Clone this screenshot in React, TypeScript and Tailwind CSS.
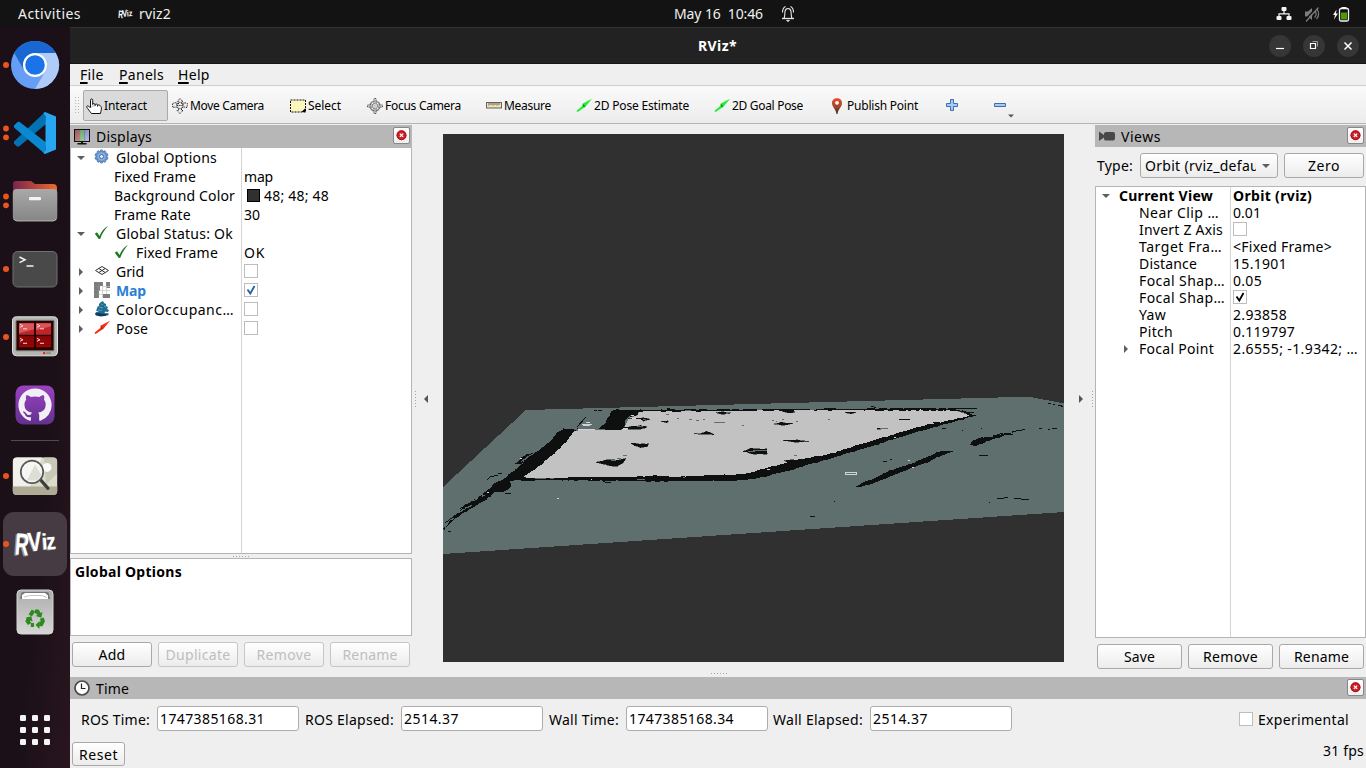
import { useLayoutEffect, useRef, useState, type ReactNode } from 'react';

/* Text whose tracking is tuned so that it takes exactly `w` pixels. */
function T({ w, c = '', children }: { w: number; c?: string; children: string }) {
  const ref = useRef<HTMLSpanElement>(null);
  const [ls, setLs] = useState(0);
  useLayoutEffect(() => {
    if (ref.current) setLs((w - ref.current.getBoundingClientRect().width) / children.length);
  }, []);
  return (
    <span ref={ref} className={`shrink-0 whitespace-pre ${c}`} style={{ letterSpacing: ls }}>
      {children}
    </span>
  );
}

/* ---------- dock ---------- */

function DockItem({ dots = 0, active = false, children }: { dots?: number; active?: boolean; children: ReactNode }) {
  return (
    <svg width="70" height="68" viewBox="0 0 70 68" className="block shrink-0">
      {active && <rect x="3" y="2" width="64" height="64" rx="11" fill="#463b42" />}
      {dots === 1 && <circle cx="6" cy="34" r="3" fill="#e95420" />}
      {dots === 2 && (
        <g fill="#e95420">
          <circle cx="6" cy="29.5" r="2.9" />
          <circle cx="6" cy="38.3" r="2.9" />
        </g>
      )}
      {children}
    </svg>
  );
}

function Dock() {
  return (
    <div className="flex w-[70px] shrink-0 flex-col bg-linear-to-br from-[#1b1017] from-60% to-[#29151f] pt-1 pb-1">
      <DockItem dots={1}>
        <circle cx="35" cy="34" r="24" fill="#669df6" />
        <path d="M14.2 22A24 24 0 0 1 55.8 22H35A12 12 0 0 0 24.6 40Z" fill="#1967d2" />
        <path d="M55.8 22A24 24 0 0 1 35 58L45.4 40A12 12 0 0 0 35 22Z" fill="#aecbfa" />
        <circle cx="35" cy="34" r="12" fill="#fff" />
        <circle cx="35" cy="34" r="9.8" fill="#1a73e8" />
      </DockItem>
      <DockItem dots={2}>
        <path d="M45 13L46 25 19 47.5 17 47.5 14 44.5 14 42.5Z" fill="#0272b5" />
        <path d="M17 23.5L19 22.5 46 43.5 45 55 14 28.5 14 26.5Z" fill="#0a88d0" />
        <path d="M45 13L56 17.5V50.5L45 55 43.5 54 45.5 51V17L43.5 14Z" fill="#27a6f2" />
      </DockItem>
      <DockItem dots={2}>
        <defs>
          <linearGradient id="folder" x1="0" x2="1">
            <stop offset="0" stopColor="#7a2450" />
            <stop offset="1" stopColor="#f06a2c" />
          </linearGradient>
          <linearGradient id="front" x1="0" x2="0" y1="0" y2="1">
            <stop offset="0" stopColor="#a9a9a9" />
            <stop offset="1" stopColor="#868686" />
          </linearGradient>
        </defs>
        <path d="M13 17a3 3 0 0 1 3-3h15l4 3h18a4 4 0 0 1 4 4v14H13Z" fill="url(#folder)" />
        <rect x="12.8" y="22" width="44.5" height="32" rx="4" fill="url(#front)" />
        <path d="M14 52a4 4 0 0 0 3 2h36a4 4 0 0 0 3-2" fill="none" stroke="#c4c4c4" strokeWidth=".8" />
        <rect x="29" y="30" width="12" height="3.2" rx="1" fill="#f4f4f4" />
      </DockItem>
      <DockItem dots={1}>
        <rect x="13" y="16.5" width="44" height="35.5" rx="4.5" fill="#494949" stroke="#717171" />
        <path d="M19.5 22l5.5 2.800-5.500 2.800M26.500 31h7" fill="none" stroke="#f4f4f4" strokeWidth="1.500" />
      </DockItem>
      <DockItem dots={1}>
        <g transform="translate(0 -.7)">
          <rect x="12.5" y="14.5" width="45" height="39" rx="4" fill="#b5b8b0" stroke="#e2e3df" />
          <rect x="16" y="18" width="38" height="30.5" rx="1" fill="#2a0404" stroke="#7b7d77" />
          <path d="M19 21h15v11.5H19zM36 21h15v11.5H36z" fill="#c22327" />
          <path d="M19 21h15v6L19 31zM36 21h15v3l-15 4z" fill="#d9575a" />
          <path d="M19 34h15v11H19zM36 34h15v11H36z" fill="#960808" />
          <path d="M19 36h32M19 39h32M19 42h32" stroke="#6d0303" strokeWidth=".6" />
          <path d="M20 22l3 1.5L20 25m3 1.5h4M37 22l3 1.5-3 1.5m3 1.5h4M20 36l3 1.5L20 39m3 2h4M37 36l3 1.5-3 1.5m3 2h4" fill="none" stroke="#ffd4d4" strokeWidth="1" />
          <path d="M43 49.8h2.2v2H43z" fill="#f21b1b" />
          <path d="M46 49.8h5v2h-5z" fill="#92958d" />
        </g>
      </DockItem>
      <DockItem>
        <defs>
          <linearGradient id="gh" x1="0" x2="0" y1="0" y2="1">
            <stop offset="0" stopColor="#9a43c1" />
            <stop offset="1" stopColor="#63308f" />
          </linearGradient>
        </defs>
        <rect x="15.5" y="14.5" width="39" height="39" rx="8" fill="url(#gh)" />
        <g transform="translate(18.4 17.4) scale(2.08)">
          <path
            fill="#f3eff6"
            d="M8 0C3.58 0 0 3.58 0 8c0 3.54 2.29 6.53 5.47 7.59.4.07.55-.17.55-.38 0-.19-.01-.82-.01-1.49-2.01.37-2.53-.49-2.69-.94-.09-.23-.48-.94-.82-1.13-.28-.15-.68-.52-.01-.53.63-.01 1.08.58 1.23.82.72 1.21 1.87.87 2.33.66.07-.52.28-.87.51-1.07-1.78-.2-3.64-.89-3.64-3.95 0-.87.31-1.59.82-2.15-.08-.2-.36-1.02.08-2.12 0 0 .67-.21 2.2.82.64-.18 1.32-.27 2-.27s1.36.09 2 .27c1.53-1.04 2.2-.82 2.2-.82.44 1.1.16 1.92.08 2.12.51.56.82 1.27.82 2.15 0 3.07-1.87 3.75-3.65 3.95.29.25.54.73.54 1.48 0 1.07-.01 1.93-.01 2.2 0 .21.15.46.55.38A8.01 8.01 0 0 0 16 8c0-4.42-3.58-8-8-8"
          />
        </g>
      </DockItem>
      <div className="flex h-[3px] w-full shrink-0 items-center justify-center">
        <div className="h-px w-12 bg-[#55494f]" />
      </div>
      <DockItem dots={1}>
        <g transform="translate(0 -.6)">
          <rect x="12.8" y="16" width="44.4" height="37.5" rx="4" fill="#dcdccb" />
          <path d="M13 20a4 4 0 0 1 4-4h25L30 45H13Z" fill="#f1f0ea" />
          <path d="M44 16h9a4 4 0 0 1 4 4v12L46 43Z" fill="#c9c8b6" />
          <path d="M12.8 45h44.4v4.5a4 4 0 0 1-4 4H16.8a4 4 0 0 1-4-4Z" fill="#aeaa93" />
          <circle cx="47" cy="26" r="4.5" fill="#fafafa" />
          <path d="M41 39l7 8" stroke="#3b3f42" strokeWidth="3.2" strokeLinecap="round" />
          <circle cx="32" cy="30.5" r="11.2" fill="#f7f7f5" fillOpacity=".85" stroke="#54585a" strokeWidth="1.7" />
          <path d="M27 39l8-16 6 10-3 6z" fill="#deded6" />
        </g>
      </DockItem>
      <DockItem dots={1} active>
        <g fontFamily="Liberation Sans, sans-serif" fontWeight="700">
          <g fill="#98979a">
            <text transform="translate(13 45.500) rotate(4) scale(.62 1)" fontSize="31">R</text>
            <text transform="translate(27.500 42) rotate(-5) scale(.78 1)" fontSize="27">V</text>
            <text transform="translate(41.500 40) rotate(-4) scale(.9 1)" fontSize="23">i</text>
            <text transform="translate(46.200 40.500) rotate(-5) scale(.8 1)" fontSize="24">z</text>
          </g>
          <g fill="#fff">
            <text transform="translate(14.500 44.500) rotate(4) scale(.62 1)" fontSize="31">R</text>
            <text transform="translate(28.500 41.500) rotate(-5) scale(.78 1)" fontSize="27">V</text>
            <text transform="translate(42.500 39.500) rotate(-4) scale(.9 1)" fontSize="22">i</text>
            <text transform="translate(47.200 39.500) rotate(-5) scale(.8 1)" fontSize="23">z</text>
          </g>
        </g>
      </DockItem>
      <DockItem>
        <defs>
          <linearGradient id="bin" x1="0" x2="0" y1="0" y2="1">
            <stop offset="0" stopColor="#adadad" />
            <stop offset="1" stopColor="#d6d6d6" />
          </linearGradient>
        </defs>
        <rect x="17" y="12" width="36" height="44" rx="4" fill="url(#bin)" stroke="#d5d5d5" />
        <path d="M20 21l1-5a2 2 0 0 1 2-2h24a2 2 0 0 1 2 2l1 5z" fill="#777" />
        <path d="M22 21v-4l3-2h20l3 2.500V21z" fill="#fff" />
        <path d="M24 19l6-1.500h12l5 2" fill="none" stroke="#aaa" strokeWidth=".7" />
        <g fill="none" stroke="#2c8a1f" strokeWidth="4">
          <path d="M30.200 37.500l3.300-5" />
          <path d="M35 33.500h2.500l2 3.200" />
          <path d="M41.800 40.200l1 2.800-1.600 3.200h-2" />
          <path d="M34 47h-3.200" />
          <path d="M29.600 46l-2-3 1.500-3" />
        </g>
        <g fill="#2c8a1f">
          <path d="M42.500 34l-1.200 5.800-5.600-1.800z" />
          <path d="M39.500 43v8l-4-4z" />
          <path d="M25.500 39.800l5.800-1.600 1.300 5.600z" />
        </g>
      </DockItem>
      <svg width="70" height="68" viewBox="0 0 70 68" className="mt-auto block">
        {[0, 1, 2].map((r) =>
          [0, 1, 2].map((k) => <rect key={`${r}${k}`} x={20 + 12 * k} y={19 + 12 * r} width="6" height="6" rx="1.300" fill="#f4f4f4" />),
        )}
      </svg>
    </div>
  );
}

/* ---------- top and title bars ---------- */

function TopBar() {
  return (
    <div className="flex h-[27px] items-center bg-[#131313] text-[14px] text-[#f0f0f0]">
      <div className="flex w-[674px] items-center pl-[18px]">
        <T w={63}>Activities</T>
        <svg width="16" height="16" viewBox="0 0 16 16" className="ml-9 mr-[6px]">
          <g fill="#fff" fontFamily="Liberation Sans, sans-serif" fontWeight="700">
            <text transform="translate(1 12) rotate(4) scale(.62 1)" fontSize="11">R</text>
            <text transform="translate(5.500 11) rotate(-5) scale(.75 1)" fontSize="10">V</text>
            <text transform="translate(10 10.500) rotate(-4) scale(.85 1)" fontSize="8.500">iz</text>
          </g>
        </svg>
        <T w={32}>rviz2</T>
      </div>
      <T w={89}>May 16  10:46</T>
      <svg width="14" height="18" viewBox="0 0 14 18" className="ml-[18px]" fill="none" stroke="#e8e8e8" strokeWidth="1.100">
        <path d="M3 13.500C4 11.500 3.700 9 4 6.500 4.300 4.500 5.500 3.500 7 3.500S9.700 4.500 10 6.500C10.300 9 10 11.500 11 13.500" />
        <path d="M1 13.500h12" strokeWidth="1.300" />
        <path d="M5.500 15.300h3L7 16.800z" fill="#e8e8e8" strokeWidth=".7" />
        <path d="M1.500 7.500C1.500 4.500 2.500 2.500 4.500 1.500M12.500 7.500C12.500 4.500 11.500 2.500 9.500 1.500" />
      </svg>
      <div className="ml-auto flex items-center pr-4">
        <svg width="16" height="16" viewBox="0 0 16 16" fill="#f4f4f4">
          <rect x="5.500" y="1" width="5" height="4" rx="1" />
          <rect x="0.500" y="10" width="5" height="4" rx="1" />
          <rect x="10.500" y="10" width="5" height="4" rx="1" />
          <path d="M8 5v3M3 10V7.800h10V10" fill="none" stroke="#f4f4f4" strokeWidth="1.200" />
        </svg>
        <svg width="16" height="16" viewBox="0 0 16 16" className="ml-3" fill="#7d7d7d">
          <path d="M1 5.500h3l4-3.500v12l-4-3.500H1z" />
          <path d="M10.500 5a4 4 0 0 1 0 6.500M12.500 3a7 7 0 0 1 0 10" fill="none" stroke="#7d7d7d" strokeWidth="1.200" />
          <path d="M1 14L13 1" stroke="#131313" strokeWidth="1.500" />
          <path d="M2 15.500L14.500 1.500" stroke="#7d7d7d" strokeWidth="1.200" />
        </svg>
        <svg width="18" height="16" viewBox="0 0 18 16" className="ml-3">
          <path d="M4.500 3.500L1 9h2l-1 4.500L6 7.500H4z" fill="#f4f4f4" />
          <rect x="7.500" y="2.500" width="9" height="12.500" rx="1.500" fill="none" stroke="#f4f4f4" strokeWidth="1.300" />
          <rect x="9.500" y="1" width="5" height="2" fill="#f4f4f4" />
          <rect x="9" y="6.500" width="6" height="7" fill="#4e9a06" />
        </svg>
      </div>
    </div>
  );
}

function TitleBar() {
  return (
    <div className="flex h-[37px] shrink-0 items-center border-t border-b border-t-[#333] border-b-[#161616] bg-[#222] text-[14px] font-bold text-white">
      <T w={39} c="ml-[628px]">RViz*</T>
      <div className="ml-auto flex gap-3 pr-[7px]">
        {['M7 13.500h8', 'M7.500 8.500h5v5h-5z', 'M7.500 7.500l7 7M14.500 7.500l-7 7'].map((d, i) => (
          <svg key={i} width="22" height="22" viewBox="0 0 22 22" className="block">
            <circle cx="11" cy="11" r="11" fill="#363636" />
            {i === 1 && <path d="M9.500 6.500h5v5" fill="none" stroke="#9a9a9a" />}
            <path d={d} fill="none" stroke="#fff" strokeWidth={i === 2 ? 1.500 : 1.200} />
          </svg>
        ))}
      </div>
    </div>
  );
}

/* ---------- toolbar ---------- */

const dashed = { fill: 'none', stroke: '#2b2b2b', strokeWidth: 1, strokeDasharray: '1.300 .9' };

const handIcon = (
  <path
    d="M4.500 9.500V2.200c0-1.700 2.200-1.700 2.200 0V6.500M6.700 6.500c0-1.300 2-1.300 2.300 0V8M9 6.800c.3-1.300 2.300-1 2.500.3V8.500M11.500 7.500c.5-1 2.500-.6 3 .4.800 1 .9 1.600.9 3 0 2-.9 3-.9 4.600H5.500C4 13.500 1.500 10.500.8 9.300c-.6-1.200 1-2 1.900-1.100l1.800 1.800"
    fill="#fff"
    stroke="#111"
    strokeWidth="1"
  />
);
const moveIcon = (
  <g {...dashed}>
    <path d="M8 .5l3 3.200H9.500V6H12V4.500L15.500 5.500 15 9.500l-3-.5-2.500 1V12.500H11L8 15.500 5 12.500h1.500V10L4 9 .8 9.500.5 5.500 4 4.500V6h2.500V3.700H5z" fill="#eee" />
    <circle cx="8" cy="7.500" r="3.200" />
    <path d="M5 7.500h6" />
  </g>
);
const selectIcon = (
  <>
    <rect x=".5" y="2" width="15" height="12" fill="#fcf5bd" stroke="#111" strokeDasharray="2 1" />
    <path d="M15.500 10v4h-4z" fill="#000" />
  </>
);
const focusIcon = (
  <g fill="none" stroke="#555" strokeWidth="1">
    <circle cx="8" cy="8" r="5" strokeWidth="1.200" stroke="#777" />
    <circle cx="8" cy="8" r="2.600" strokeDasharray="1.500 .6" />
    <path d="M7 6V.5h2V6M7 10v5.500h2V10M6 7H.5v2H6M10 7h5.500v2H10" strokeDasharray="1.500 .6" />
    <path d="M8 2v12M2 8h12" stroke="#bbb" />
  </g>
);
const measureIcon = (
  <>
    <rect x=".5" y="4.500" width="15" height="5.500" fill="#efe2ae" stroke="#63636a" />
    <path d="M3 5v2.500M5 5v2M7 5v2.500M9 5v2M11 5v2.500M13 5v2" stroke="#555" strokeWidth=".9" />
  </>
);
const arrow = (color: string, mid: string) => (
  <>
    <path d="M1 12.300L7.500 7 9 9 2 13.800C1 14.300.3 13 1 12.300z" fill={color} />
    <path d="M16 .8L6 6 8.800 9.500z" fill={color} />
    <path d="M7 6.800l1.500 2" stroke={mid} strokeWidth="1.500" />
  </>
);
const pinIcon = (
  <>
    <defs>
      <linearGradient id="pin" x1="0" x2="0" y1="0" y2="1">
        <stop offset="0" stopColor="#f04a2a" />
        <stop offset=".6" stopColor="#94452c" />
        <stop offset="1" stopColor="#352013" />
      </linearGradient>
    </defs>
    <path d="M8 .2c3 0 5 2 5 4.800C13 9 9 11 8.500 16h-1C7 11 3 9 3 5 3 2.200 5 .2 8 .2z" fill="url(#pin)" />
    <circle cx="8" cy="4.800" r="1.900" fill="#fff" />
  </>
);

function Tool({ c, w, label, children }: { c: string; w: number; label: string; children: ReactNode }) {
  return (
    <div className={`flex h-[31px] shrink-0 items-center gap-[2px] pl-[3px] ${c}`}>
      <svg width="16" height="16" viewBox="0 0 16 16" className="shrink-0">{children}</svg>
      <T w={w}>{label}</T>
    </div>
  );
}

function ToolBar() {
  return (
    <div className="flex h-[39px] shrink-0 items-center border-t border-b border-t-[#cfcfcf] border-b-[#b4b4b4] bg-linear-to-b from-[#fafafa] to-[#ececec] pt-[2px] pl-[5px] text-[12px]">
      <svg width="5" height="17" className="mr-[3px]">
        {[0, 1, 2, 3, 4, 5].map((i) => (
          <path key={i} d={`M0 ${i * 3 + 0.5}h1M3 ${i * 3 + 0.5}h1`} stroke="#b5b5b5" />
        ))}
      </svg>
      <div className="mr-px flex h-[31px] w-[85px] shrink-0 items-center gap-[2px] rounded-[2px] border border-[#a9a9a9] bg-[#dadada] pl-[2px]">
        <svg width="16" height="16" viewBox="0 0 16 16" className="shrink-0">{handIcon}</svg>
        <T w={43}>Interact</T>
      </div>
      <Tool c="w-[118px]" w={74} label="Move Camera">{moveIcon}</Tool>
      <Tool c="w-[77px]" w={33} label="Select">{selectIcon}</Tool>
      <Tool c="w-[119px]" w={76} label="Focus Camera">{focusIcon}</Tool>
      <Tool c="w-[90px]" w={47} label="Measure">{measureIcon}</Tool>
      <Tool c="w-[138px]" w={95} label="2D Pose Estimate">{arrow('#22ee33', '#0b8a1c')}</Tool>
      <Tool c="w-[115px]" w={71} label="2D Goal Pose">{arrow('#22ee33', '#0b8a1c')}</Tool>
      <Tool c="w-[115px]" w={71} label="Publish Point">{pinIcon}</Tool>
      <svg width="80" height="31" viewBox="0 0 80 31" fill="#a9c9ee" stroke="#3a6eb0" strokeWidth="1">
        <path d="M9.500 9.500h3v4h4v3h-4v4h-3v-4h-4v-3h4z" />
        <path d="M53.500 13.500h11v3h-11z" />
        <path d="M67 24.500h6l-3 3z" fill="#555" stroke="none" />
      </svg>
    </div>
  );
}

/* ---------- shared widgets ---------- */

function PanelHeader({ icon, title, w, h }: { icon: ReactNode; title: string; w: number; h: string }) {
  return (
    <div className={`flex shrink-0 items-center bg-[#b7b7b7] pl-[4px] pr-[2px] ${h}`}>
      <svg width="16" height="16" viewBox="0 0 16 16">{icon}</svg>
      <T w={w} c="ml-[6px]">{title}</T>
      <div className="mt-[2px] ml-auto flex size-[17px] items-start justify-center self-start rounded-[2px] border border-[#888] bg-linear-to-b from-white to-[#eee] pt-[2px]">
        <svg width="11" height="10.500" viewBox="0 0 11 11">
          <circle cx="5.500" cy="5.500" r="5.200" fill="#cc2027" />
          <circle cx="5.500" cy="5.500" r="4.600" fill="none" stroke="#a3161c" />
          <path d="M3.800 3.800l3.400 3.400M7.200 3.800L3.800 7.200" stroke="#fff" strokeWidth="1.400" />
        </svg>
      </div>
    </div>
  );
}

function Button({ c, w, label, off = false }: { c: string; w: number; label: string; off?: boolean }) {
  return (
    <div
      className={`flex shrink-0 items-center justify-center rounded-[3px] border bg-linear-to-b from-white to-[#ececec] ${off ? 'border-[#c6c6c6] text-[#bebebe]' : 'border-[#a9a9a9]'} ${c}`}
    >
      <T w={w}>{label}</T>
    </div>
  );
}

function Check({ on = false, color = '#000' }: { on?: boolean; color?: string }) {
  return (
    <svg width="14" height="14" viewBox="0 0 14 14" className="block shrink-0">
      <rect x=".5" y=".5" width="13" height="13" fill="#fff" stroke="#bdbdbd" />
      {on && <path d="M3.500 6.500l2.800 4L10.500 3" fill="none" stroke={color} strokeWidth="1.800" />}
    </svg>
  );
}

function Twist({ open }: { open?: boolean }) {
  return (
    <svg width="10" height="10" viewBox="0 0 10 10" className="block shrink-0" fill="#5e5e5e">
      {open === true && <path d="M1 3h8L5 7z" />}
      {open === false && <path d="M3 1v8l4-4z" />}
    </svg>
  );
}

/* ---------- displays ---------- */

const gear = (
  <g transform="translate(7.500 7.500)">
    {[0, 36, 72, 108, 144, 180, 216, 252, 288, 324].map((a) => (
      <rect key={a} x="-1.200" y="-6.500" width="2.400" height="3" rx=".5" fill="#7ea6d8" stroke="#3465a4" strokeWidth=".7" transform={`rotate(${a})`} />
    ))}
    <circle r="4.800" fill="#86aede" stroke="#4a7ab8" strokeWidth=".7" />
    <circle r="2" fill="#e8f0fa" stroke="#3465a4" strokeWidth=".9" />
  </g>
);
const tick = <path d="M.8 8.800l2.200-1.500L5.500 11C7.500 6.500 10 3.300 14 .8 10.500 5 8 9 6.200 14H4.800z" fill="#1e7a1e" />;
const gridIcon = (
  <g fill="none" stroke="#333" strokeWidth="1">
    <path d="M1.500 7.500L8 3.500l6.500 4L8 11.500z" />
    <path d="M4.800 5.500l6.400 4M11.200 5.500l-6.400 4" />
  </g>
);
const mapIcon = (
  <>
    <rect width="16" height="16" fill="#fff" />
    <path d="M0 0h9v4H6v5H5v7H0zM12 0h4v6h-4zM9 12h7v4H9z" fill="#7c7c7c" />
    <path d="M9 4.500h7M5 8.500h11M5 12.500h4M8.500 4v12M12.500 4v8" stroke="#c4c4c4" strokeWidth=".7" />
    <path d="M0 4.500h6M0 8.500h5M0 12.500h5M4.500 0v16M8.500 0v4M12.500 0v4" stroke="#8f8f8f" strokeWidth=".5" />
  </>
);
const treeIcon = (
  <>
    <path d="M7 1l2-1 1 2 2 1v2l2 1-1 2 2 1-1 2-3-.5-.5 2H15l-1 2-4-.5-2 1-3-1-4-.500L2 11l3-.500-3-1 1-2 .500-2L5 5l0-2z" fill="#1f6d91" />
    <path d="M1 12.500l4-.500 3 .8 6-.300-2 2.300-5 .700-5-1z" fill="#123a5e" />
    <path d="M7 3l2 1M5 6l4 1M4 9l4 .500M10 5l2 1" stroke="#58a3bc" />
  </>
);

type Row = { open?: boolean; icon?: ReactNode; label: string; w: number; pad: string; bold?: boolean; value?: ReactNode };

const displayRows: Row[] = [
  { open: true, icon: gear, label: 'Global Options', w: 101, pad: 'pl-[5px]' },
  { label: 'Fixed Frame', w: 82, pad: 'pl-[43px]', value: <T w={29}>map</T> },
  {
    label: 'Background Color', w: 121, pad: 'pl-[43px]',
    value: (
      <>
        <span className="mr-[4px] ml-[3px] size-[13px] border border-black bg-[#303030]" />
        <T w={65}>48; 48; 48</T>
      </>
    ),
  },
  { label: 'Frame Rate', w: 77, pad: 'pl-[43px]', value: <T w={16}>30</T> },
  { open: true, icon: tick, label: 'Global Status: Ok', w: 117, pad: 'pl-[5px]' },
  { icon: tick, label: 'Fixed Frame', w: 82, pad: 'pl-[43px]', value: <T w={21}>OK</T> },
  { open: false, icon: gridIcon, label: 'Grid', w: 28, pad: 'pl-[5px]', value: <span className="-mt-[2px]"><Check /></span> },
  { open: false, icon: mapIcon, label: 'Map', w: 30, pad: 'pl-[5px]', bold: true, value: <span className="-mt-[2px]"><Check on color="#2260a8" /></span> },
  { open: false, icon: treeIcon, label: 'ColorOccupanc…', w: 118, pad: 'pl-[5px]', value: <span className="-mt-[2px]"><Check /></span> },
  { open: false, icon: arrow('#fb2b12', '#8a3a10'), label: 'Pose', w: 32, pad: 'pl-[5px]', value: <span className="-mt-[2px]"><Check /></span> },
];

const monitor = (
  <>
    <defs>
      <linearGradient id="shade" x1="0" x2="1" y1="0" y2="1">
        <stop offset="0" stopColor="#000" stopOpacity=".25" />
        <stop offset="1" stopColor="#fff" stopOpacity=".25" />
      </linearGradient>
    </defs>
    <rect x="0" y="0" width="16" height="13" fill="#111" />
    <rect x="1" y="1" width="5" height="11" fill="#c97a7a" />
    <rect x="6" y="1" width="4.500" height="11" fill="#7fcf7f" />
    <rect x="10.500" y="1" width="4.500" height="11" fill="#a0a0ea" />
    <rect x="1" y="1" width="14" height="11" fill="url(#shade)" />
    <path d="M7 13h2v1h3.500v1.500h-9V14H7z" fill="#111" />
  </>
);

function Displays() {
  return (
    <div className="flex w-[342px] shrink-0 flex-col">
      <PanelHeader icon={monitor} title="Displays" w={56} h="h-[23px]" />
      <div className="flex h-[406px] flex-col border border-t-0 border-[#b5b5b5] bg-white">
        {displayRows.map((r, i) => (
          <div key={i} className="flex h-[19px] shrink-0">
            <div className={`flex w-[171px] shrink-0 items-center border-r border-[#d6d6d6] ${r.pad}`}>
              {r.open !== undefined && <Twist open={r.open} />}
              {r.icon && (
                <svg width="16" height="16" viewBox="0 0 16 16" className={r.open !== undefined ? '-mt-px mr-[6px] ml-[8px] shrink-0' : '-mt-px mr-[6px] shrink-0'}>
                  {r.icon}
                </svg>
              )}
              <T w={r.w} c={r.bold ? 'font-bold text-[#2a7fd4]' : ''}>{r.label}</T>
            </div>
            <div className="flex items-center pl-[2px]">{r.value}</div>
          </div>
        ))}
        <div className="w-[171px] grow border-r border-[#d6d6d6]" />
      </div>
      <div className="flex h-[4px] items-center justify-center"><Dots n={6} /></div>
      <div className="h-[78px] border border-[#b5b5b5] bg-white px-1 pt-[3px]">
        <T w={107} c="inline-block font-bold">Global Options</T>
      </div>
      <div className="mt-[6px] flex gap-[6px] pl-[2px]">
        <Button c="h-[25px] w-[80px]" w={27} label="Add" />
        <Button c="h-[25px] w-[80px]" w={65} label="Duplicate" off />
        <Button c="h-[25px] w-[80px]" w={55} label="Remove" off />
        <Button c="h-[25px] w-[80px]" w={55} label="Rename" off />
      </div>
    </div>
  );
}

function Dots({ n, vertical = false }: { n: number; vertical?: boolean }) {
  return (
    <span className={`flex gap-[2px] ${vertical ? 'flex-col' : ''}`}>
      {Array.from({ length: n }, (_, i) => <i key={i} className="block size-px bg-[#a5a5a5]" />)}
    </span>
  );
}

/* ---------- occupancy map ---------- */

/* Breaks the edges of a polygon into short uneven steps, as scanned walls have. */
function rough(src: string, amp: number, seed: number) {
  const p = src.split(' ').map((s) => s.split(',').map(Number));
  let s = seed;
  const rnd = () => ((s = (s * 16807) % 2147483647) / 2147483647 - 0.5) * 2;
  const out: string[] = [];
  p.forEach(([x, y], i) => {
    const [u, v] = p[(i + 1) % p.length];
    const n = Math.max(1, Math.round(Math.hypot(u - x, v - y) / 9));
    for (let k = 0; k < n; k++) {
      const a = x + ((u - x) * k) / n + rnd() * amp;
      const b = y + ((v - y) * k) / n + rnd() * amp * 0.5;
      out.push(`${a.toFixed(1)},${b.toFixed(1)}`);
    }
  });
  return out.join(' ');
}

const walls = [
  '372,146 410,149 420,140 400,158 385,180 355,208 322,238 290,266 248,292 300,297 440,290 560,292 640,287 700,291 800,286 880,284 930,280 950,272 1010,256 1060,243 1170,222 1300,180 1420,145 1530,120 1590,108 1560,94 1535,92 1100,91 590,95 575,100 558,118 550,149 470,148 495,130 512,93 530,89 900,88 1200,86 1400,85 1530,85 1570,92 1607,106 1570,118 1430,156 1330,188 1180,233 1060,268 960,293 900,302 640,304 330,300 212,303 212,322 190,336 165,338 130,364 90,387 60,405 30,430 12,450 10,445 40,410 70,378 105,358 140,335 160,312 200,290 240,256 262,234 300,208 335,180 350,160',
  '228,252 240,236 262,222 280,218 262,232 244,250',
  '1245,323 1275,306 1310,292 1350,272 1410,252 1460,232 1500,214 1540,214 1500,228 1460,248 1400,270 1350,290 1310,306 1270,319',
  '1592,196 1598,184 1616,173 1640,172 1660,170 1690,160 1720,158 1670,174 1640,184 1612,198',
];
const blobs = [
  '470,248 490,242 510,238 530,242 555,236 548,250 530,260 505,256',
  '575,190 600,192 628,192 620,200 600,202 582,196',
  '765,162 790,158 800,154 822,164 800,163',
  '910,214 930,206 980,206 982,222 950,222 940,222',
  '540,141 565,141 600,137 624,140 600,148 560,148',
  '565,116 620,114 628,118 612,124 600,118',
  '572,96 594,94 592,106 572,110',
  '1005,132 1025,127 1056,130 1030,136',
  '1032,182 1070,180 1107,183 1070,187',
  '1035,242 1060,240 1085,244 1050,254',
  '830,99 850,95 870,99 850,103',
  '665,124 685,123 680,128 670,127',
  '1020,90 1060,90 1066,97 1040,98',
  '1218,97 1248,98 1236,101',
];
const marks =
  'M418,132l22,-22M410,142l18,-18M142,300l8,-8M150,290l24,-4M174,282h12M196,342h18M205,330l-10,-4M14,430l40,-30M24,454h8M60,385l35,-15M488,305l12,2h14M560,303h50M640,287h10M462,91h8M474,91h12M680,87h9M720,93h30M1177,84v6M1292,82l6,-3l10,4M1378,118h32M1312,146h10M1324,147h12M1506,145h12M1566,151h4M1622,145h4M1660,168l30,-9M1690,165h28M1716,156l16,-4l22,-3M1798,145h8M1825,148h6M1836,145h14M1616,228h28M1670,356h16l10,-3h8M1722,355h14l10,3h20M1330,244h10M1350,239h6M1110,410h12l4,2M1181,364h4M1646,367h4M1824,70h8M1840,74h5M1855,77h10M1862,79h8M1530,85h80M1460,134h20M1480,128h20M1650,178v6M1580,98h22';
const greens = 'M530,235h14M548,226h12M512,242h16M590,139h18M822,127h32M748,118h8M768,121h10M790,119h5M678,103h8M905,136h6M860,97h12M712,115h4M996,121h5M1008,125h4M1068,124h6M1164,118h5M1026,118h5M1063,226h8M940,212h40M925,216h20M730,293h6M590,298h24M1320,145h24M1310,148h12M610,120h8M735,92h18M1110,90h18M770,162h12';
const lights = 'M350,355h6M141,338h6M1404,241h6M1415,262h6M1216,278h34v5h-34zM240,236h5M415,148h50M430,138h20M425,133h30M437,128h12M550,145h14M575,116h14M545,150h14M572,107h10M982,268h8M453,298h4M1362,172h5M1440,88h4';

function Scene() {
  return (
    <svg width="621" height="528" viewBox="443 134 621 528" className="mt-[9px] block shrink-0 bg-[#303030]" shapeRendering="crispEdges">
      <polygon points="443,487 526,410 1029,396.700 1064,403.500 1064,512 443,554" fill="#5e6f6d" />
      <g transform="translate(440 380) scale(.33333)">
        <polygon points="240,294 405,152 470,149 550,149 565,118 590,92 1535,88 1595,108 1420,150 1170,228 1010,265 930,288" fill="#c2c2c2" />
        <g fill="#0e1010">
          {walls.map((w, i) => <polygon key={i} points={rough(w, 2.8, 17 + i * 91)} />)}
          {blobs.map((b, i) => <polygon key={i} points={rough(b, 2.2, 31 + i * 57)} stroke="#0e1010" strokeWidth="1.500" />)}
        </g>
        <path d="M45,405l28,-18M75,385l20,-8M32,420l10,-6M100,362l14,-6M244,244l16,-10M125,350l8,-5" stroke="#5e6f6d" strokeWidth="3.500" />
        <path d={marks} fill="none" stroke="#0e1010" strokeWidth="3" />
        <path d={greens} fill="none" stroke="#5e6f6d" strokeWidth="3" />
        <path d={lights} fill="none" stroke="#d2d4d3" strokeWidth="3" />
      </g>
    </svg>
  );
}

/* ---------- views ---------- */

const viewRows: Row[] = [
  { open: true, label: 'Current View', w: 94, pad: 'pl-[5px]', bold: true, value: <T w={79} c="font-bold">Orbit (rviz)</T> },
  { label: 'Near Clip …', w: 80, pad: 'pl-[43px]', value: <T w={28}>0.01</T> },
  { label: 'Invert Z Axis', w: 84, pad: 'pl-[43px]', value: <span className="-mt-px"><Check /></span> },
  { label: 'Target Fra…', w: 83, pad: 'pl-[43px]', value: <T w={99}>{'<Fixed Frame>'}</T> },
  { label: 'Distance', w: 58, pad: 'pl-[43px]', value: <T w={54}>15.1901</T> },
  { label: 'Focal Shap…', w: 86, pad: 'pl-[43px]', value: <T w={29}>0.05</T> },
  { label: 'Focal Shap…', w: 86, pad: 'pl-[43px]', value: <span className="-mt-px"><Check on /></span> },
  { label: 'Yaw', w: 27, pad: 'pl-[43px]', value: <T w={54}>2.93858</T> },
  { label: 'Pitch', w: 34, pad: 'pl-[43px]', value: <T w={62}>0.119797</T> },
  { open: false, label: 'Focal Point', w: 75, pad: 'pl-[25px]', value: <T w={125}>2.6555; -1.9342; …</T> },
];

const camera = <path d="M0 3.500L5 7V5.500a2 2 0 0 1 2-1.500h7a2 2 0 0 1 2 2v4.500a2 2 0 0 1-2 2H7a2 2 0 0 1-2-1.500V9.500L0 13z" fill="#484848" />;

function Views() {
  return (
    <div className="flex w-[271px] shrink-0 flex-col">
      <PanelHeader icon={camera} title="Views" w={40} h="h-[22px]" />
      <div className="mt-[6px] flex h-[25px] items-center pl-[2px]">
        <T w={36}>Type:</T>
        <div className="ml-[7px] flex h-[25px] w-[138px] items-center rounded-[3px] border border-[#a9a9a9] bg-linear-to-b from-white to-[#ececec] pl-[4px]">
          <div className="flex w-[111px] overflow-hidden"><T w={114}>Orbit (rviz_defau</T></div>
          <div className="ml-[5px]"><Twist open /></div>
        </div>
        <Button c="ml-[6px] h-[25px] w-[80px]" w={32} label="Zero" />
      </div>
      <div className="mt-[8px] flex h-[452px] flex-col border border-[#b5b5b5] bg-white">
        {viewRows.map((r, i) => (
          <div key={i} className="flex h-[17px] shrink-0">
            <div className={`flex w-[135px] shrink-0 items-center border-r border-[#d6d6d6] ${r.pad}`}>
              {r.open !== undefined && <span className="mr-[8px]"><Twist open={r.open} /></span>}
              <T w={r.w} c={r.bold ? 'font-bold' : ''}>{r.label}</T>
            </div>
            <div className="flex items-center pl-[2px]">{r.value}</div>
          </div>
        ))}
        <div className="w-[135px] grow border-r border-[#d6d6d6]" />
      </div>
      <div className="mt-[6px] flex gap-[6px] pl-[2px]">
        <Button c="h-[25px] w-[85px]" w={31} label="Save" />
        <Button c="h-[25px] w-[85px]" w={55} label="Remove" />
        <Button c="h-[25px] w-[85px]" w={55} label="Rename" />
      </div>
    </div>
  );
}

/* ---------- time ---------- */

const clock = (
  <>
    <circle cx="8" cy="8" r="7" fill="#fff" stroke="#4b4b4b" strokeWidth="1.700" />
    <path d="M7.500 3.500v5h4" fill="none" stroke="#222" strokeWidth="1.200" />
  </>
);

const times = [
  { label: 'ROS Time:', w: 69, value: '1747385168.31', v: 105, c: 'w-[87px]' },
  { label: 'ROS Elapsed:', w: 89, value: '2514.37', v: 55, c: 'w-[102px]' },
  { label: 'Wall Time:', w: 70, value: '1747385168.34', v: 105, c: 'w-[83px]' },
  { label: 'Wall Elapsed:', w: 90, value: '2514.37', v: 55, c: 'w-[102px]' },
];

function TimePanel() {
  return (
    <div className="flex h-[91px] shrink-0 flex-col">
      <PanelHeader icon={clock} title="Time" w={33} h="h-[22px]" />
      <div className="mt-[7px] flex h-[25px] items-center">
        {times.map((t) => (
          <div key={t.label} className="flex items-center">
            <div className={`flex justify-end pt-px pr-[7px] ${t.c}`}><T w={t.w}>{t.label}</T></div>
            <div className="flex h-[25px] w-[142px] items-center rounded-[3px] border border-[#adadad] bg-white pl-[2px]">
              <T w={t.v}>{t.value}</T>
            </div>
          </div>
        ))}
        <div className="mr-[17px] ml-auto flex items-center gap-[5px]">
          <Check />
          <T w={91} c="pt-px">Experimental</T>
        </div>
      </div>
      <div className="mt-[11px] flex justify-between pr-[2px] pl-[2px]">
        <Button c="h-[24px] w-[53px]" w={39} label="Reset" />
        <T w={41} c="-mt-[1px]">31 fps</T>
      </div>
    </div>
  );
}

export default function App() {
  return (
    <div className="flex h-[768px] w-[1366px] flex-col overflow-hidden bg-[#efefef] font-['Noto_Sans',sans-serif] leading-[19px] text-black">
      <TopBar />
      <div className="flex min-h-0 grow">
        <Dock />
        <div className="flex min-w-0 grow flex-col text-[14px]">
          <TitleBar />
          <div className="flex h-[21px] shrink-0 items-center pl-[10px] tracking-[.3px]">
            {[['F', 'ile', 'w-[39px]'], ['P', 'anels', 'w-[59px]'], ['H', 'elp', 'w-[60px]']].map(([a, b, c]) => (
              <span key={a} className={c}>
                <u className="decoration-[1.5px] underline-offset-2">{a}</u>
                {b}
              </span>
            ))}
          </div>
          <ToolBar />
          <div className="flex h-[553px] shrink-0 pt-[1px]">
            <Displays />
            <div className="flex w-[31px] shrink-0 items-center pl-[3px] pb-[5px]">
              <Dots n={6} vertical />
              <svg width="10" height="10" className="ml-[5px]" fill="#555"><path d="M7 1v8L3 5z" /></svg>
            </div>
            <div className="flex w-[621px] shrink-0 flex-col justify-between">
              <Scene />
              <div className="flex h-[7px] items-center justify-center pr-[70px]"><Dots n={6} /></div>
            </div>
            <div className="flex w-[31px] shrink-0 items-center pl-[12px] pb-[5px]">
              <svg width="10" height="10" className="mr-[6px]" fill="#555"><path d="M3 1v8l4-4z" /></svg>
              <Dots n={6} vertical />
            </div>
            <Views />
          </div>
          <TimePanel />
        </div>
      </div>
    </div>
  );
}
